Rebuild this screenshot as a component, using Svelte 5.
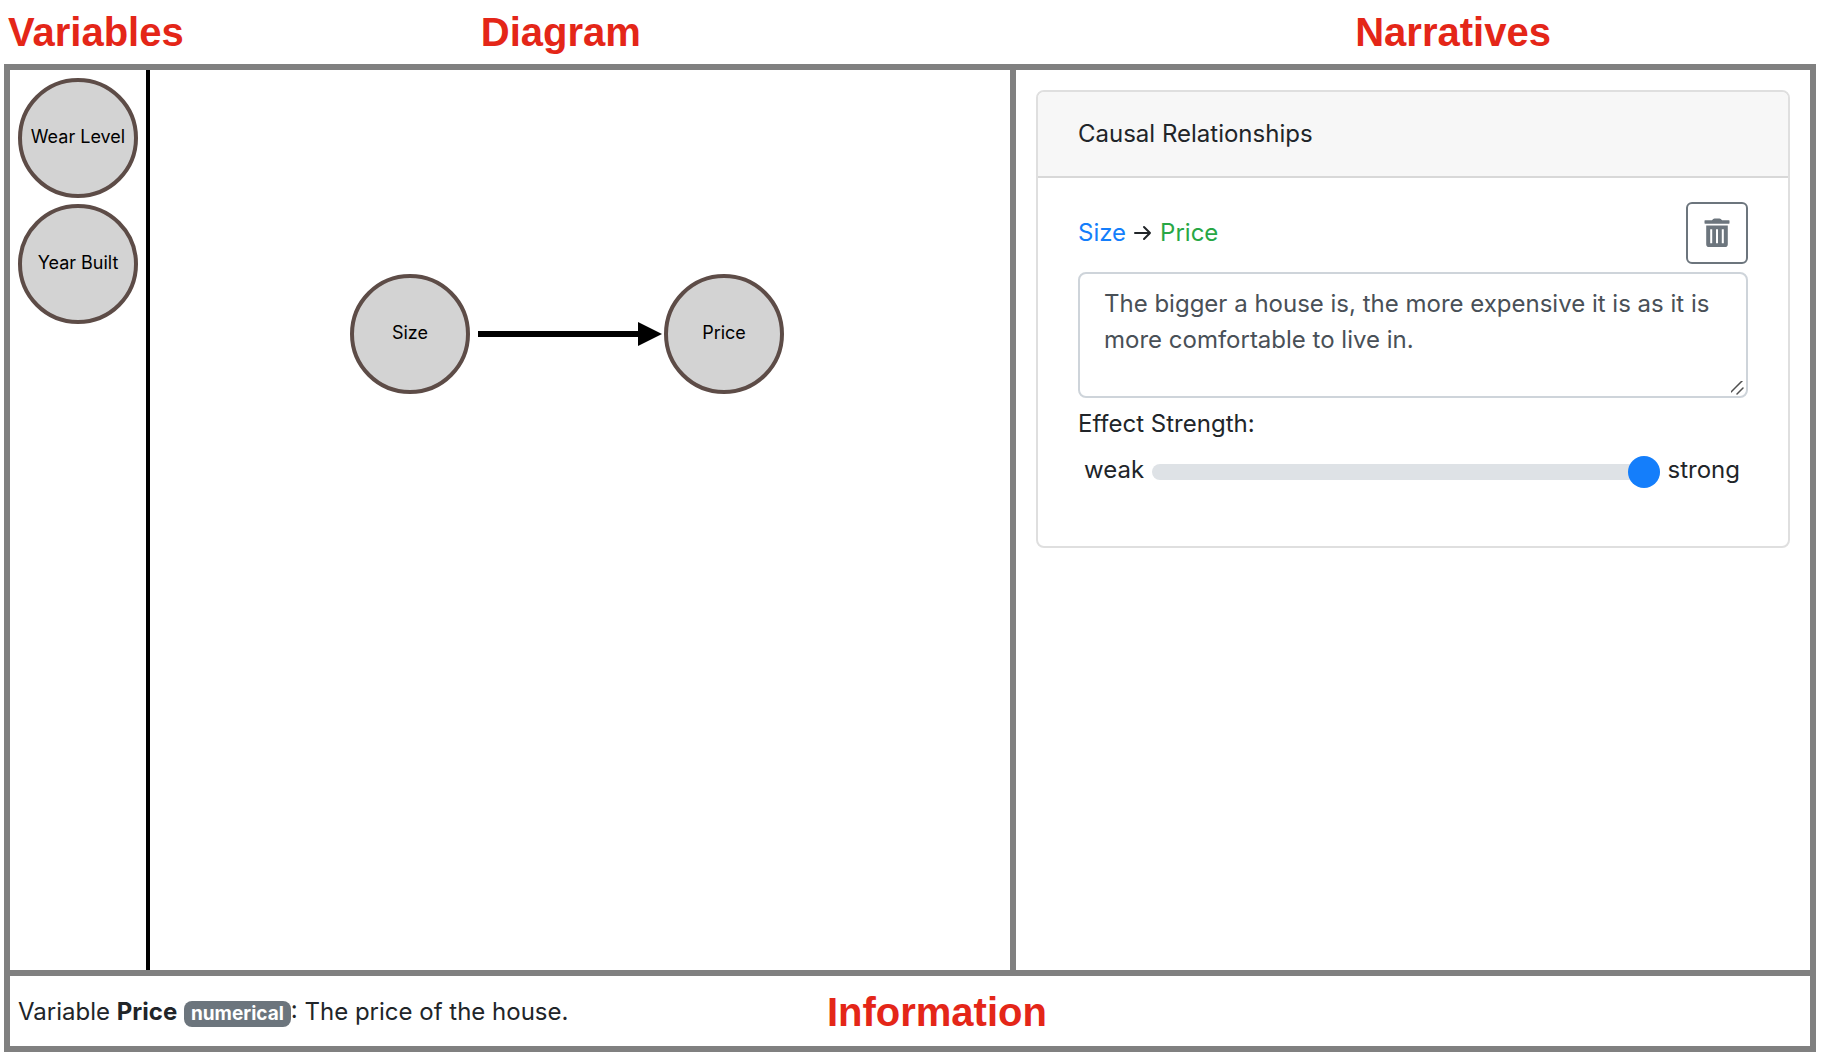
<script>
  const variables = ['Wear Level', 'Year Built'];
  const nodes = [
    { name: 'Size', x: 260, y: 264 },
    { name: 'Price', x: 574, y: 264 },
  ];
  let narrative = $state(
    'The bigger a house is, the more expensive it is as it is more comfortable to live in.'
  );
  let strength = $state(100);
</script>

<div class="page">
  <header class="titles">
    <h2>Variables</h2>
    <h2>Diagram</h2>
    <h2>Narratives</h2>
  </header>

  <main class="frame">
    <div class="workspace">
      <section class="editor">
        <div class="variables">
          {#each variables as name}
            <button class="variable" type="button">{name}</button>
          {/each}
        </div>
        <svg class="diagram" role="img" aria-label="Size causes Price">
          <path class="edge" d="M328 264H490" />
          <path d="M488 252L512 264L488 276Z" />
          {#each nodes as node}
            <circle class="node" cx={node.x} cy={node.y} r="58" />
            <text class="node-label" x={node.x} y={node.y + 5}>{node.name}</text>
          {/each}
        </svg>
      </section>

      <section class="narratives">
        <article class="card">
          <div class="card-header">Causal Relationships</div>
          <div class="card-body">
            <div class="relation">
              <div class="relation-name">
                <span class="cause">Size</span>
                <svg class="arrow" viewBox="0 0 18 16" aria-hidden="true">
                  <path d="M1 8H16M10 2L16 8L10 14" />
                </svg>
                <span class="effect">Price</span>
              </div>
              <button class="delete" type="button" aria-label="Delete relationship">
                <svg viewBox="0 0 26 30" aria-hidden="true">
                  <path
                    fill-rule="evenodd"
                    d="M1 2.2H8Q9 .5 10.500 .5H15.500Q17 .5 18 2.200H25Q25.500 2.200 25.500 3V5Q25.500 5.800 25 5.800H1Q.5 5.800 .5 5V3Q.5 2.200 1 2.200ZM2.200 7.500H23.800V26.200Q23.800 29 21 29H5Q2.200 29 2.200 26.200ZM6.200 11.200V25.200H8.200V11.200ZM12 11.200V25.200H14V11.200ZM17.800 11.200V25.200H19.800V11.200Z"
                  />
                </svg>
              </button>
            </div>
            <textarea aria-label="Narrative" bind:value={narrative}></textarea>
            <label class="strength-label" for="strength">Effect Strength:</label>
            <div class="strength">
              <span>weak</span>
              <input id="strength" type="range" min="0" max="100" bind:value={strength} />
              <span>strong</span>
            </div>
          </div>
        </article>
      </section>
    </div>

    <footer class="information">
      <p>
        Variable <strong>Price</strong> <span class="badge">numerical</span>: The price of the house.
      </p>
      <h2>Information</h2>
    </footer>
  </main>
</div>

<style>
  :global(body) {
    background: #fff;
  }

  .page,
  .page * {
    box-sizing: border-box;
  }

  .page {
    display: flex;
    flex-direction: column;
    min-height: 100vh;
    padding: 0 6px 2px 4px;
    font: 24px/36px Inter, 'Liberation Sans', sans-serif;
    color: #212529;
  }

  h2 {
    margin: 0;
    font: bold 40px/64px 'Liberation Sans', Arial, sans-serif;
    color: #e42618;
  }

  .titles {
    display: grid;
    grid-template-columns: 472fr 873fr 460fr;
    padding-left: 4px;
  }

  .frame {
    flex: 1;
    display: flex;
    flex-direction: column;
    border: 6px solid #808080;
  }

  .workspace {
    flex: 1;
    display: grid;
    grid-template-columns: 1000fr 800fr;
  }

  .editor {
    display: flex;
    min-width: 0;
  }

  .variables {
    display: flex;
    flex-direction: column;
    gap: 6px;
    padding: 8px;
    border-right: 4px solid #000;
  }

  .variable {
    width: 120px;
    height: 120px;
    padding: 0 0 2px;
    border: 4px solid #5d4c47;
    border-radius: 50%;
    background: #d3d3d3;
    font: 18px/24px Inter, 'Liberation Sans', sans-serif;
    color: #000;
    white-space: nowrap;
  }

  .diagram {
    flex: 1;
    min-width: 0;
    height: 100%;
  }

  .edge {
    stroke: #000;
    stroke-width: 6;
  }

  .node {
    fill: #d3d3d3;
    stroke: #5d4c47;
    stroke-width: 4;
  }

  .node-label {
    font-size: 18px;
    fill: #000;
    text-anchor: middle;
  }

  .narratives {
    min-width: 0;
    padding: 20px;
    border-left: 6px solid #808080;
  }

  .card {
    border: 2px solid #dfdfdf;
    border-radius: 8px;
    overflow: hidden;
  }

  .card-header {
    padding: 24px 40px;
    border-bottom: 2px solid #d8d8d8;
    background: #f7f7f7;
  }

  .card-body {
    display: flex;
    flex-direction: column;
    padding: 24px 40px 56px;
  }

  .relation {
    display: flex;
    align-items: center;
    justify-content: space-between;
    margin-bottom: 8px;
  }

  .relation-name {
    display: flex;
    align-items: center;
    gap: 8px;
  }

  .cause {
    color: #147efb;
  }

  .effect {
    color: #28a745;
  }

  .arrow {
    width: 18px;
    height: 16px;
    fill: none;
    stroke: #212529;
    stroke-width: 2;
    stroke-linecap: round;
    stroke-linejoin: round;
  }

  .delete {
    display: grid;
    place-items: center;
    width: 62px;
    height: 62px;
    padding: 0;
    border: 2px solid #6c757d;
    border-radius: 6px;
    background: transparent;
  }

  .delete svg {
    width: 26px;
    height: 30px;
    fill: #6c757d;
  }

  textarea {
    display: block;
    width: 100%;
    height: 126px;
    padding: 12px 24px;
    border: 2px solid #ced4da;
    border-radius: 8px;
    background: #fff;
    font: inherit;
    color: #495057;
    resize: vertical;
  }

  textarea::-webkit-scrollbar {
    width: 18px;
    height: 18px;
  }

  textarea::-webkit-resizer {
    background: url("data:image/svg+xml,%3Csvg xmlns='http://www.w3.org/2000/svg' width='18' height='18'%3E%3Cpath d='M1 16L15 2M9 16L15 10' stroke='%23505050' stroke-width='1.5' stroke-linecap='round'/%3E%3C/svg%3E")
      no-repeat right bottom;
  }

  .strength-label {
    margin: 8px 0;
  }

  .strength {
    display: flex;
    align-items: center;
    gap: 8px;
    padding: 0 8px 0 6px;
  }

  .strength input {
    flex: 1;
    min-width: 0;
    height: 36px;
    margin: 4px 0 0;
    background: transparent;
    appearance: none;
  }

  .strength input::-webkit-slider-runnable-track {
    height: 16px;
    border-radius: 8px;
    background: #dee2e6;
  }

  .strength input::-webkit-slider-thumb {
    width: 32px;
    height: 32px;
    margin-top: -8px;
    border-radius: 50%;
    background: #147efb;
    appearance: none;
  }

  .information {
    display: grid;
    grid-template-columns: 808fr 974fr;
    align-items: center;
    height: 76px;
    padding: 2px 8px 0;
    border-top: 6px solid #808080;
  }

  .information p {
    margin: 0;
  }

  .badge {
    display: inline-block;
    padding: 4px 7px;
    border-radius: 8px;
    background: #6c757d;
    font-size: 19px;
    font-weight: 700;
    line-height: 18px;
    color: #fff;
  }
</style>
